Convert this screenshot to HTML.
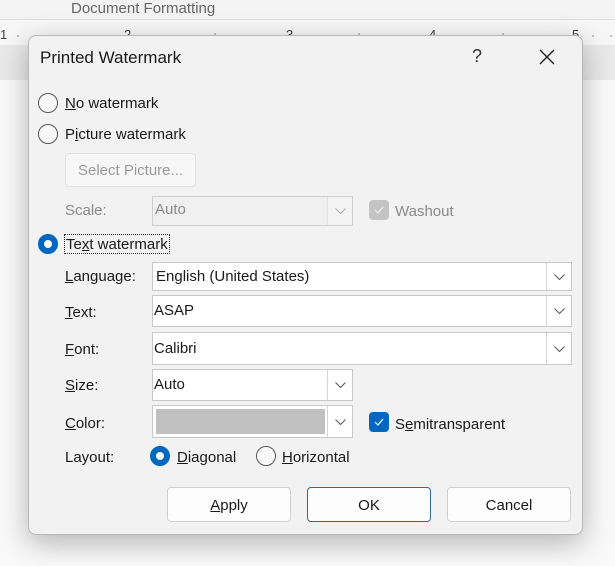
<!DOCTYPE html>
<html><head><meta charset="utf-8"><style>
*{box-sizing:border-box;margin:0;padding:0}
body{width:615px;height:566px;overflow:hidden;background:#fafafa;font-family:"Liberation Sans",sans-serif;font-size:15px;color:#1a1a1a;position:relative}
.a{position:absolute;white-space:nowrap}
.t{padding-top:1px}
.top{left:0;top:0;width:615px;height:20px;background:#f3f3f3;border-bottom:1px solid #dcdcdc}
.ruler{left:0;top:21px;width:615px;height:24px;background:#f7f7f7}
.band{left:0;top:45px;width:615px;height:35px;background:#e9e9e9}
.dlg{left:28px;top:35px;width:555px;height:500px;background:#f2f2f2;border:1px solid #b8b8b8;border-radius:8px;box-shadow:0 8px 28px rgba(0,0,0,.28)}
.rad{width:20px;height:20px;border:1px solid #555;border-radius:50%;background:#f8f8f8}
.rsel{width:20px;height:20px;border-radius:50%;background:#fff;border:6px solid #0067c0}
.box{background:#fff;border:1px solid #c8c8c8}
.dd{border-left:1px solid #d4d4d4;width:25px;top:0;bottom:0;right:0;position:absolute;background:#fff}
.dd svg{position:absolute;left:7px;top:50%;margin-top:-3px}
.btn{background:#fdfdfd;border:1px solid #d0d0d0;border-radius:4px;text-align:center;line-height:35px;height:35px;width:124px}
u{text-decoration:underline}
.g{color:#8a8a8a}
</style></head><body>
<div class="a top"></div>
<div class="a" style="left:71px;top:0;color:#666;font-size:15px">Document Formatting</div>
<div class="a ruler"></div>
<svg class="a" style="left:0;top:30px" width="615" height="10"><g stroke="#888" stroke-width="1">
<path d="M18 5v2M36 5v2M54 5v2M72 5v2M90 5v2M108 5v2M143 5v2M161 5v2M179 5v2M197 5v2M215 5v2M233 5v2M251 5v2M269 5v2M305 5v2M323 5v2M341 5v2M359 5v2M377 5v2M395 5v2M413 5v2M449 5v2M467 5v2M485 5v2M503 5v2M521 5v2M539 5v2M557 5v2M593 5v2M611 5v2"/>
<path d="M215 3v6M359 3v6M503 3v6"/></g></svg>
<div class="a" style="left:0;top:27px;font-size:13px;color:#444">1</div>
<div class="a" style="left:124px;top:27px;font-size:13px;color:#444">2</div>
<div class="a" style="left:286px;top:27px;font-size:13px;color:#444">3</div>
<div class="a" style="left:429px;top:27px;font-size:13px;color:#444">4</div>
<div class="a" style="left:572px;top:27px;font-size:13px;color:#444">5</div>
<div class="a band"></div>
<div class="a" style="left:0;top:80px;width:615px;height:486px;background:#f9f9f9"></div>

<div class="a dlg"></div>
<div class="a" style="left:40px;top:48px;font-size:17px">Printed Watermark</div>
<div class="a" style="left:472px;top:46px;font-size:18px;color:#333">?</div>
<svg class="a" style="left:539px;top:49px" width="16" height="16"><path d="M1 1L15 15M15 1L1 15" stroke="#222" stroke-width="1.4"/></svg>

<div class="a rad" style="left:38px;top:93px"></div>
<div class="a t" style="left:65px;top:94px"><u>N</u>o watermark</div>
<div class="a rad" style="left:38px;top:124px"></div>
<div class="a t" style="left:65px;top:125px">P<u>i</u>cture watermark</div>
<div class="a" style="left:65px;top:153px;width:131px;height:34px;background:#f7f7f7;border:1px solid #e2e2e2;border-radius:4px;text-align:center;line-height:34px;color:#9a9a9a">Select Picture...</div>

<div class="a g t" style="left:65px;top:201px">Scale:</div>
<div class="a" style="left:152px;top:196px;width:201px;height:30px;background:#f0f0f0;border:1px solid #cfcfcf"><span class="a g" style="left:2px;top:4px">Auto</span><div class="dd" style="background:#f3f3f3;border-left:1px solid #e0e0e0"><svg width="11" height="6"><path d="M.5 .5L5.5 5.5L10.5 .5" fill="none" stroke="#aaa"/></svg></div></div>
<div class="a" style="left:369px;top:200px;width:20px;height:20px;background:#c4c4c4;border-radius:4px"><svg style="position:absolute;left:5px;top:6px" width="10" height="8"><path d="M1 4L4 7L9 1" fill="none" stroke="#eee" stroke-width="1.2"/></svg></div>
<div class="a g t" style="left:395px;top:202px">Washout</div>

<div class="a rsel" style="left:38px;top:234px"></div>
<div class="a" style="left:64px;top:234px;border:1px dotted #333;padding:1px 1px 0">Te<u>x</u>t watermark</div>

<div class="a t" style="left:65px;top:267px"><u>L</u>anguage:</div>
<div class="a box" style="left:152px;top:262px;width:420px;height:29px"><span class="a" style="left:3px;top:5px">English (United States)</span><div class="dd"><svg width="11" height="6"><path d="M.5 .5L5.5 5.5L10.5 .5" fill="none" stroke="#555"/></svg></div></div>
<div class="a t" style="left:65px;top:303px"><u>T</u>ext:</div>
<div class="a box" style="left:152px;top:295px;width:420px;height:32px"><span class="a" style="left:1px;top:6px">ASAP</span><div class="dd"><svg width="11" height="6"><path d="M.5 .5L5.5 5.5L10.5 .5" fill="none" stroke="#555"/></svg></div></div>
<div class="a t" style="left:65px;top:340px"><u>F</u>ont:</div>
<div class="a box" style="left:152px;top:332px;width:420px;height:33px"><span class="a" style="left:1px;top:7px">Calibri</span><div class="dd"><svg width="11" height="6"><path d="M.5 .5L5.5 5.5L10.5 .5" fill="none" stroke="#555"/></svg></div></div>
<div class="a t" style="left:65px;top:376px"><u>S</u>ize:</div>
<div class="a box" style="left:152px;top:369px;width:201px;height:32px"><span class="a" style="left:1px;top:6px">Auto</span><div class="dd"><svg width="11" height="6"><path d="M.5 .5L5.5 5.5L10.5 .5" fill="none" stroke="#555"/></svg></div></div>
<div class="a t" style="left:65px;top:414px"><u>C</u>olor:</div>
<div class="a box" style="left:152px;top:405px;width:201px;height:33px"><div class="a" style="left:3px;top:3px;width:169px;height:25px;background:#c0c0c0"></div><div class="dd"><svg width="11" height="6"><path d="M.5 .5L5.5 5.5L10.5 .5" fill="none" stroke="#555"/></svg></div></div>
<div class="a" style="left:369px;top:412px;width:20px;height:20px;background:#0067c0;border-radius:4px"><svg style="position:absolute;left:5px;top:6px" width="10" height="8"><path d="M1 4L4 7L9 1" fill="none" stroke="#fff" stroke-width="1.2"/></svg></div>
<div class="a t" style="left:395px;top:415px">S<u>e</u>mitransparent</div>

<div class="a t" style="left:65px;top:448px">Layout:</div>
<div class="a rsel" style="left:150px;top:446px"></div>
<div class="a t" style="left:177px;top:448px"><u>D</u>iagonal</div>
<div class="a rad" style="left:256px;top:446px"></div>
<div class="a t" style="left:282px;top:448px"><u>H</u>orizontal</div>

<div class="a btn" style="left:167px;top:487px"><u>A</u>pply</div>
<div class="a btn" style="left:307px;top:487px;border-color:#2b6b9b">OK</div>
<div class="a btn" style="left:447px;top:487px">Cancel</div>
</body></html>
